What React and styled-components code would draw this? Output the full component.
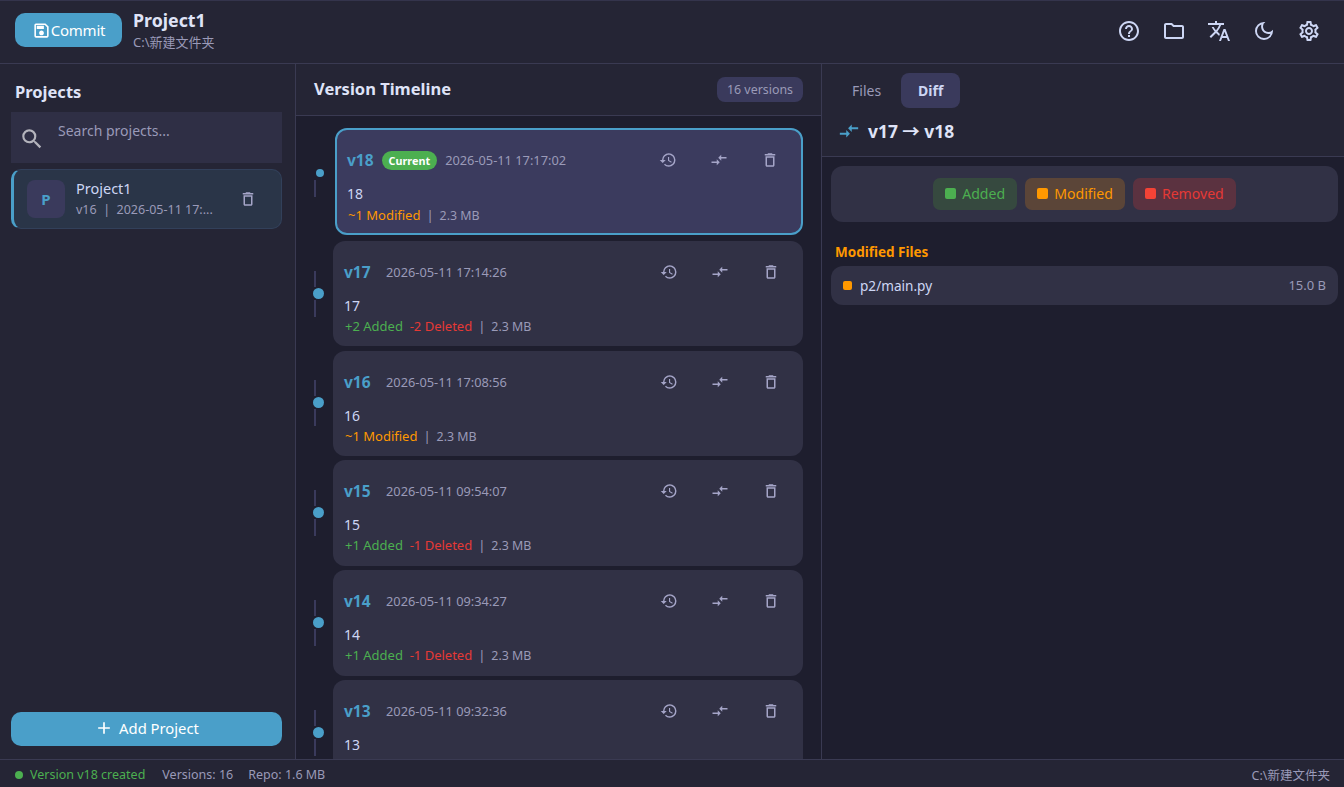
import React from "react";
import styled, { createGlobalStyle } from "styled-components";
import {
  MdAdd,
  MdCompareArrows,
  MdDeleteOutline,
  MdHelpOutline,
  MdHistory,
  MdOutlineDarkMode,
  MdOutlineFolder,
  MdOutlineSave,
  MdOutlineSettings,
  MdSearch,
  MdTranslate,
} from "react-icons/md";

const Global = createGlobalStyle`
  * { box-sizing: border-box; }
  html, body { margin: 0; height: 100%; background: #1e1e2e; }
  body { font-family: "Noto Sans", "Noto Sans CJK SC", sans-serif; color: #cdd6f4; }
  #root { height: 100%; }
`;

const Page = styled.div`
  width: 1344px;
  height: 787px;
  display: flex;
  flex-direction: column;
  overflow: hidden;
  background: #1e1e2e;
`;

const Header = styled.header`
  height: 64px;
  flex: none;
  display: flex;
  align-items: center;
  padding: 0 23px 2px 15px;
  background: #252535;
  border-top: 1px solid #34344c;
  border-bottom: 1px solid #3a3a52;
`;

const CommitButton = styled.button`
  width: 107px;
  height: 34px;
  margin-bottom: 2px;
  display: flex;
  align-items: center;
  justify-content: center;
  padding: 0;
  border: 0;
  border-radius: 10px;
  background: #4a9fc9;
  color: #fff;
  font: 15px "Noto Sans", sans-serif;
  letter-spacing: -0.2px;
`;

const ProjectInfo = styled.div`
  margin: 0 0 4px 11px;
  display: flex;
  flex-direction: column;
`;

const ProjectName = styled.div`
  font-size: 17.8px;
  line-height: 24px;
  font-weight: 700;
  color: #dfe3f7;
`;

const ProjectPath = styled.div`
  margin-top: 1px;
  font-size: 13px;
  line-height: 18px;
  color: #9a9ab8;
`;

const HeaderIcons = styled.div`
  margin-left: auto;
  display: flex;
  gap: 21px;
  color: #cdd6f4;
  font-size: 24px;
  svg { display: block; }
`;

const Main = styled.div`
  flex: 1;
  min-height: 0;
  display: flex;
`;

const Sidebar = styled.aside`
  width: 296px;
  flex: none;
  display: flex;
  flex-direction: column;
  padding: 0 13px 13px 11px;
  background: #252535;
  border-right: 1px solid #3a3a52;
`;

const SidebarTitle = styled.h2`
  margin: 16px 0 9px 4px;
  font-size: 16.5px;
  line-height: 23px;
  font-weight: 700;
  color: #dfe3f7;
`;

const Search = styled.div`
  height: 51px;
  display: flex;
  align-items: flex-start;
  padding: 14px 0 0 8px;
  background: #2f2f45;
  color: #b4b4bc;
`;

const SearchInput = styled.input`
  flex: 1;
  min-width: 0;
  margin: -7px 0 0 13px;
  height: 22px;
  padding: 0;
  border: 0;
  outline: 0;
  background: transparent;
  color: #cdd6f4;
  font: 14px "Noto Sans", sans-serif;
  &::placeholder { color: #9a9ab8; opacity: 1; }
`;

const ProjectItem = styled.div`
  margin-top: 6px;
  height: 60px;
  display: flex;
  align-items: center;
  padding: 0 24px 0 13px;
  background: #2a3548;
  border: 1px solid #32405a;
  border-left: 3px solid #4a9fc9;
  border-radius: 10px;
`;

const Avatar = styled.div`
  width: 38px;
  height: 38px;
  flex: none;
  display: flex;
  align-items: center;
  justify-content: center;
  border-radius: 8px;
  background: #3a3a5c;
  color: #4a9fc9;
  font-size: 15px;
  font-weight: 700;
`;

const ItemText = styled.div`
  flex: 1;
  min-width: 0;
  margin: 0 0 2px 11px;
`;

const ItemName = styled.div`
  margin-bottom: 2px;
  font-size: 14.5px;
  line-height: 21px;
  color: #cdd6f4;
`;

const ItemMeta = styled.div`
  font-size: 12.5px;
  line-height: 18px;
  color: #9a9ab8;
  white-space: pre;
`;

const AddButton = styled.button`
  margin-top: auto;
  height: 34px;
  display: flex;
  align-items: center;
  justify-content: center;
  gap: 5px;
  padding: 0 0 2px;
  border: 0;
  border-radius: 10px;
  background: #4a9fc9;
  color: #fff;
  font: 14.8px "Noto Sans", sans-serif;
`;

const Timeline = styled.section`
  width: 526px;
  flex: none;
  display: flex;
  flex-direction: column;
  border-right: 1px solid #3a3a52;
`;

const TimelineHeader = styled.div`
  height: 52px;
  flex: none;
  display: flex;
  align-items: center;
  justify-content: space-between;
  padding: 0 18px 0 18px;
  background: #252535;
  border-bottom: 1px solid #3a3a52;
`;

const TimelineTitle = styled.h2`
  margin: 0 0 3px;
  font-size: 16.5px;
  font-weight: 700;
  color: #dfe3f7;
`;

const CountBadge = styled.div`
  height: 25px;
  padding: 0 10px;
  display: flex;
  align-items: center;
  border-radius: 8px;
  background: #3a3a5c;
  color: #9a9ab8;
  font-size: 12.4px;
`;

const VersionList = styled.div`
  flex: 1;
  min-height: 0;
  overflow: hidden;
  padding: 12px 18px 0 0;
`;

const VersionRow = styled.div`
  display: flex;
  margin-bottom: ${(p) => (p.$selected ? "5.8px" : "4.2px")};
`;

const Rail = styled.div`
  width: ${(p) => (p.$selected ? "39px" : "37px")};
  flex: none;
  display: flex;
  flex-direction: column;
  align-items: flex-start;
  justify-content: center;
  padding-left: 17px;
  padding-top: ${(p) => (p.$selected ? "3px" : "0")};
`;

const RailLine = styled.div`
  width: 2px;
  height: ${(p) => p.$height}px;
  margin-left: 1px;
  background: #3a3a5c;
`;

const RailDot = styled.div`
  width: ${(p) => (p.$selected ? "8px" : "11px")};
  height: ${(p) => (p.$selected ? "8px" : "11px")};
  margin: ${(p) => (p.$selected ? "0 0 3px 3px" : "1px 0")};
  border-radius: 50%;
  background: #4a9fc9;
`;

const Card = styled.div`
  flex: 1;
  min-width: 0;
  height: ${(p) => (p.$selected ? "107px" : "105.6px")};
  padding: ${(p) => (p.$selected ? "12px 14px 0 10px" : "13px 15px 0 11px")};
  border-radius: 12px;
  background: ${(p) => (p.$selected ? "#3b3b5e" : "#313145")};
  border: ${(p) => (p.$selected ? "2px solid #4a9fc9" : "0")};
`;

const CardTop = styled.div`
  height: 36px;
  display: flex;
  align-items: center;
`;

const VersionName = styled.span`
  width: ${(p) => (p.$selected ? "auto" : "42px")};
  font-size: 15.5px;
  font-weight: 700;
  color: #4a9fc9;
`;

const CurrentBadge = styled.span`
  height: 19px;
  margin-left: 8px;
  padding: 0 7px;
  display: flex;
  align-items: center;
  border-radius: 10px;
  background: #4caf50;
  color: #fff;
  font-size: 10.8px;
  font-weight: 700;
`;

const VersionDate = styled.span`
  margin-left: ${(p) => (p.$selected ? "8px" : "0")};
  font-size: 12.8px;
  color: #9a9ab8;
`;

const Actions = styled.div`
  margin-left: auto;
  display: flex;
  color: #a5a5c8;
  font-size: 18px;
`;

const ActionButton = styled.div`
  width: 51px;
  display: flex;
  justify-content: center;
  margin-right: ${(p) => (p.$last ? "-8px" : "0")};
`;

const Message = styled.div`
  margin-top: 6px;
  font-size: 14px;
  line-height: 19px;
  color: #cdd6f4;
`;

const Stats = styled.div`
  margin-top: ${(p) => (p.$selected ? "3px" : "2px")};
  padding-left: 1px;
  font-size: 13px;
  line-height: 19px;
  color: #9a9ab8;
  white-space: pre;
`;

const Stat = styled.span`
  color: ${(p) => p.$color};
`;

const StatSeparator = styled.span`
  margin: 0 6px 0 6px;
`;

const StatSize = styled.span`
  font-size: 12.4px;
`;

const DiffPanel = styled.section`
  flex: 1;
  min-width: 0;
  display: flex;
  flex-direction: column;
`;

const DiffHeader = styled.div`
  height: 93px;
  flex: none;
  padding: 9px 0 0 20px;
  background: #252535;
  border-bottom: 1px solid #3a3a52;
`;

const Tabs = styled.div`
  display: flex;
  gap: 10px;
`;

const Tab = styled.div`
  height: 35px;
  display: flex;
  align-items: center;
  padding: ${(p) => (p.$active ? "0 17px 1px" : "0 10px 1px")};
  border-radius: 8px;
  background: ${(p) => (p.$active ? "#3a3a5c" : "transparent")};
  color: ${(p) => (p.$active ? "#cdd6f4" : "#9a9ab8")};
  font-size: 14px;
  font-weight: ${(p) => (p.$active ? 700 : 400)};
`;

const DiffTitle = styled.div`
  margin: 6px 0 0 -4px;
  display: flex;
  align-items: center;
  gap: 8px;
  font-size: 17.4px;
  line-height: 34px;
  font-weight: 700;
  color: #dfe3f7;
  svg { color: #4a9fc9; font-size: 22px; flex: none; }
`;

const DiffBody = styled.div`
  padding: 9px 6px 0 9px;
`;

const Legend = styled.div`
  height: 56px;
  display: flex;
  align-items: center;
  justify-content: center;
  gap: 8px;
  border-radius: 12px;
  background: #313145;
`;

const Chip = styled.div`
  height: 32px;
  padding: 0 12px 1px;
  display: flex;
  align-items: center;
  gap: 6px;
  border-radius: 7px;
  background: ${(p) => p.$bg};
  color: ${(p) => p.$color};
  font-size: 14.1px;
`;

const Square = styled.span`
  width: ${(p) => p.$size}px;
  height: ${(p) => p.$size}px;
  flex: none;
  border-radius: 2px;
  background: ${(p) => p.$color};
`;

const SectionTitle = styled.h3`
  margin: 20px 0 4px 4px;
  font-size: 13.5px;
  line-height: 20px;
  font-weight: 700;
  color: #ff9800;
`;

const FileRow = styled.div`
  height: 39px;
  display: flex;
  align-items: center;
  padding: 0 12px 1px;
  border-radius: 12px;
  background: #313145;
`;

const FileName = styled.span`
  margin-left: 8px;
  font-size: 13.6px;
  color: #cdd6f4;
`;

const FileSize = styled.span`
  margin-left: auto;
  font-size: 13px;
  color: #9a9ab8;
`;

const StatusBar = styled.footer`
  height: 28px;
  flex: none;
  display: flex;
  align-items: center;
  gap: 15px;
  padding: 2px 14px 0 15px;
  background: #252535;
  border-top: 1px solid #3a3a52;
  color: #9a9ab8;
  font-size: 12.5px;
`;

const StatusOk = styled.span`
  display: flex;
  align-items: center;
  gap: 7px;
  margin-right: 2px;
  color: #4caf50;
`;

const StatusDot = styled.span`
  width: 8px;
  height: 8px;
  border-radius: 50%;
  background: #4caf50;
`;

const StatusPath = styled.span`
  margin-left: auto;
`;

// v13 is cut off by the status bar, so it has no stats line on screen
const versions = [
  { name: "v18", date: "2026-05-11 17:17:02", msg: "18", modified: 1, selected: true, stats: true },
  { name: "v17", date: "2026-05-11 17:14:26", msg: "17", added: 2, deleted: 2, stats: true },
  { name: "v16", date: "2026-05-11 17:08:56", msg: "16", modified: 1, stats: true },
  { name: "v15", date: "2026-05-11 09:54:07", msg: "15", added: 1, deleted: 1, stats: true },
  { name: "v14", date: "2026-05-11 09:34:27", msg: "14", added: 1, deleted: 1, stats: true },
  { name: "v13", date: "2026-05-11 09:32:36", msg: "13" },
];

const Version = ({ version }) => {
  const { name, date, msg, modified, added, deleted, selected, stats } = version;
  return (
    <VersionRow $selected={selected}>
      <Rail $selected={selected}>
        {!selected && <RailLine $height={16} />}
        <RailDot $selected={selected} />
        <RailLine $height={17} />
      </Rail>
      <Card $selected={selected}>
        <CardTop>
          <VersionName $selected={selected}>{name}</VersionName>
          {selected && <CurrentBadge>Current</CurrentBadge>}
          <VersionDate $selected={selected}>{date}</VersionDate>
          <Actions>
            <ActionButton><MdHistory /></ActionButton>
            <ActionButton><MdCompareArrows /></ActionButton>
            <ActionButton $last><MdDeleteOutline /></ActionButton>
          </Actions>
        </CardTop>
        <Message>{msg}</Message>
        {stats && (
          <Stats $selected={selected}>
            {added && <Stat $color="#4caf50">+{added} Added  </Stat>}
            {deleted && <Stat $color="#e53935">-{deleted} Deleted</Stat>}
            {modified && <Stat $color="#ff9800">~{modified} Modified</Stat>}
            <StatSeparator>|</StatSeparator>
            <StatSize>2.3 MB</StatSize>
          </Stats>
        )}
      </Card>
    </VersionRow>
  );
};

const App = () => (
  <Page>
    <Global />
    <Header>
      <CommitButton>
        <MdOutlineSave size={19} />
        Commit
      </CommitButton>
      <ProjectInfo>
        <ProjectName>Project1</ProjectName>
        <ProjectPath>C:\新建文件夹</ProjectPath>
      </ProjectInfo>
      <HeaderIcons>
        <MdHelpOutline />
        <MdOutlineFolder />
        <MdTranslate />
        <MdOutlineDarkMode />
        <MdOutlineSettings />
      </HeaderIcons>
    </Header>
    <Main>
      <Sidebar>
        <SidebarTitle>Projects</SidebarTitle>
        <Search>
          <MdSearch size={26} />
          <SearchInput placeholder="Search projects..." />
        </Search>
        <ProjectItem>
          <Avatar>P</Avatar>
          <ItemText>
            <ItemName>Project1</ItemName>
            <ItemMeta>{"v16  |  2026-05-11 17:..."}</ItemMeta>
          </ItemText>
          <MdDeleteOutline size={18} color="#a5a5c8" />
        </ProjectItem>
        <AddButton>
          <MdAdd size={20} />
          Add Project
        </AddButton>
      </Sidebar>
      <Timeline>
        <TimelineHeader>
          <TimelineTitle>Version Timeline</TimelineTitle>
          <CountBadge>16 versions</CountBadge>
        </TimelineHeader>
        <VersionList>
          {versions.map((version) => (
            <Version key={version.name} version={version} />
          ))}
        </VersionList>
      </Timeline>
      <DiffPanel>
        <DiffHeader>
          <Tabs>
            <Tab>Files</Tab>
            <Tab $active>Diff</Tab>
          </Tabs>
          <DiffTitle>
            <MdCompareArrows />
            v17 → v18
          </DiffTitle>
        </DiffHeader>
        <DiffBody>
          <Legend>
            <Chip $bg="#36493f" $color="#4caf50">
              <Square $size={11} $color="#4caf50" />
              Added
            </Chip>
            <Chip $bg="#5b4538" $color="#ff9800">
              <Square $size={11} $color="#ff9800" />
              Modified
            </Chip>
            <Chip $bg="#5b3240" $color="#e53935">
              <Square $size={11} $color="#f44336" />
              Removed
            </Chip>
          </Legend>
          <SectionTitle>Modified Files</SectionTitle>
          <FileRow>
            <Square $size={9} $color="#ff9800" />
            <FileName>p2/main.py</FileName>
            <FileSize>15.0 B</FileSize>
          </FileRow>
        </DiffBody>
      </DiffPanel>
    </Main>
    <StatusBar>
      <StatusOk>
        <StatusDot />
        Version v18 created
      </StatusOk>
      <span>Versions: 16</span>
      <span>Repo: 1.6 MB</span>
      <StatusPath>C:\新建文件夹</StatusPath>
    </StatusBar>
  </Page>
);

export default App;
